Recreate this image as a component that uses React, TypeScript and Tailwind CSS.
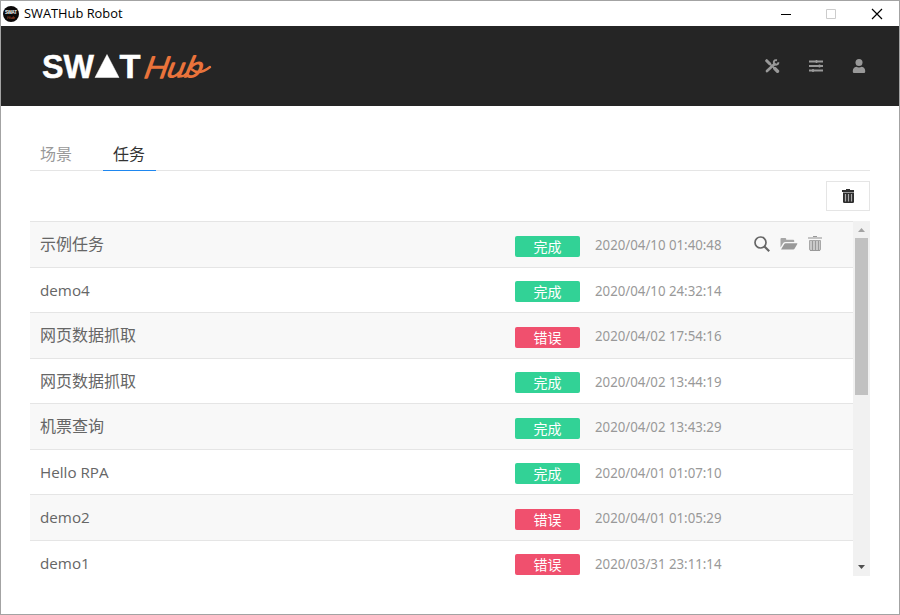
import React from "react";

const rows = [
  { name: "示例任务", ok: true, date: "2020/04/10 01:40:48" },
  { name: "demo4", ok: true, date: "2020/04/10 24:32:14" },
  { name: "网页数据抓取", ok: false, date: "2020/04/02 17:54:16" },
  { name: "网页数据抓取", ok: true, date: "2020/04/02 13:44:19" },
  { name: "机票查询", ok: true, date: "2020/04/02 13:43:29" },
  { name: "Hello RPA", ok: true, date: "2020/04/01 01:07:10" },
  { name: "demo2", ok: false, date: "2020/04/01 01:05:29" },
  { name: "demo1", ok: false, date: "2020/03/31 23:11:14" },
];

function Trash() {
  return (
    <svg width="14" height="16" viewBox="0 0 14 16" className="block" fill="#2e2e2e">
      <path d="M5 1h4v1h4v2H1V2h4z" />
      <path d="M2 4.500h11v9.200q0 1.300-1.300 1.300H3.300Q2 15 2 13.700z" />
      <path d="M4.500 6v7.500M7.500 6v7.500M10.500 6v7.500" stroke="#aaa" strokeWidth="1.200" />
    </svg>
  );
}

function TrashOutline() {
  return (
    <svg width="14" height="16" viewBox="0 0 14 16" className="block">
      <path d="M5 0h4v1H5z" fill="#999" />
      <path d="M0 1h14v2H0z" fill="#c4c4c4" />
      <path d="M1.500 4.500h11V13q0 1.500-1.500 1.500H3Q1.500 14.500 1.500 13z" fill="#c9c9c9" stroke="#a8a8a8" />
      <path d="M4.500 5v9M7.500 5v9M10.500 5v9" stroke="#999" />
      <path d="M2 14.500h10" stroke="#999" />
    </svg>
  );
}

function Logo() {
  return (
    <svg width="176" height="40" viewBox="0 0 176 40" className="block">
      <g fill="#fff" stroke="#fff" strokeWidth="0.5" fontFamily="'Liberation Sans', Arial, sans-serif" fontWeight="700" fontSize="33">
        <text x="2" y="31.500" textLength="52" lengthAdjust="spacingAndGlyphs">SW</text>
        <text x="79.500" y="31.500" textLength="21" lengthAdjust="spacingAndGlyphs">T</text>
        <path d="M67 8.500 79 31.500H55z" />
      </g>
      <g
        fill="#ea733b"
        stroke="#ea733b"
        strokeWidth="1.700"
        strokeLinejoin="round"
        fontFamily="Lato, sans-serif"
        fontStyle="italic"
        fontWeight="300"
      >
        <text transform="translate(103 31.500) skewX(-12)" fontSize="30" textLength="24" lengthAdjust="spacingAndGlyphs">H</text>
        <text transform="translate(126 31) skewX(-14)" fontSize="28" textLength="17" lengthAdjust="spacingAndGlyphs">u</text>
        <text transform="translate(143.500 31) skewX(-16)" fontSize="29" textLength="17" lengthAdjust="spacingAndGlyphs">b</text>
      </g>
      <path d="M140 30q3 1 6-2M152 23.500q3 2.500 6 2.500 6 0 12-5" fill="none" stroke="#ea733b" strokeWidth="2.400" strokeLinecap="round" />
    </svg>
  );
}

export default function App() {
  return (
    <div className="flex h-[615px] w-[900px] flex-col overflow-hidden border border-[#a3a3a3] bg-white font-['Open_Sans','Noto_Sans_CJK_SC',sans-serif]">
      <div className="flex h-[25px] shrink-0 items-center justify-between pl-[2px] pr-[15px]">
        <div className="flex items-center gap-[5px]">
          <svg width="16" height="16" viewBox="0 0 16 16">
            <circle cx="8" cy="8" r="8" fill="#0b0808" />
            <text x="2" y="8" fontSize="4.500" fontWeight="700" fill="#fff" fontFamily="Liberation Sans, sans-serif" textLength="12">SWAT</text>
            <text x="4" y="13" fontSize="4.500" fontStyle="italic" fill="#c45a30" fontFamily="Lato, sans-serif" textLength="8">Hub</text>
          </svg>
          <svg width="110" height="20" className="block">
            <text x="0" y="14" fontSize="12.500" textLength="98.500" lengthAdjust="spacingAndGlyphs" fill="#000">SWATHub Robot</text>
          </svg>
        </div>
        <svg width="104" height="14" viewBox="0 0 104 14" fill="none" className="block">
          <path d="M1 7.500h10" stroke="#000" />
          <path d="M46.500 2.500h9v9h-9z" stroke="#ccc" />
          <path d="m92 2 10 10M102 2 92 12" stroke="#000" strokeWidth="1.200" />
        </svg>
      </div>

      <header className="flex h-[80px] shrink-0 items-center justify-between bg-[#252525] pl-[39px] pr-[33px]">
        <Logo />
        <div className="flex items-center text-[#999]">
          <svg width="15" height="14" viewBox="0 0 15 14" className="mr-[29px] block" fill="none" stroke="currentColor" strokeLinecap="round">
            <path d="m1.700 1.700 3 3" strokeWidth="3" />
            <path d="m4 4 5 5" strokeWidth="1.700" />
            <path d="m9.800 9.500 2.700 2.700" strokeWidth="3.400" />
            <path d="m2 12 7.500-7" strokeWidth="2.700" />
            <path d="M12 1.200Q9.200.6 8.800 3q-.1 2.700 2.300 2.700 2.200 0 2.300-2.400" strokeWidth="1.900" strokeLinecap="butt" />
          </svg>
          <svg width="14" height="14" viewBox="0 0 14 14" className="mr-[29px] block" fill="none" stroke="currentColor">
            <path d="M0 2.500h14M0 7h14M0 11.500h14" strokeWidth="1.900" />
            <path d="M7.500 1v3M10.500 5.500v3M4 10v3" strokeWidth="1.600" />
          </svg>
          <svg width="14" height="14" viewBox="0 0 14 14" className="block" fill="currentColor">
            <circle cx="7" cy="3.500" r="3.500" />
            <path d="M2 14Q.8 14 .8 12.800V12q0-3.500 3.500-4.200Q7 9 9.700 7.800q3.500.7 3.500 4.200v.8q0 1.200-1.200 1.200z" />
          </svg>
        </div>
      </header>

      <main className="flex flex-col px-[29px] pt-[30px]">
        <nav className="flex h-[35px] shrink-0 border-b border-[#e5e5e5] text-base">
          <div className="mr-[20px] h-[35px] w-[53px] pl-[10px] leading-[37px] text-[#999]">场景</div>
          <div className="h-[35px] w-[53px] border-b border-[#1e87f0] pl-[10px] leading-[37px] text-[#333]">任务</div>
        </nav>

        <div className="flex h-[50px] justify-end pt-[10px]">
          <button className="flex h-[30px] w-[44px] items-center justify-center border border-[#e5e5e5]">
            <Trash />
          </button>
        </div>

        <div className="flex h-[355px]">
          <div className="flex-1 overflow-hidden">
            {rows.map((r, i) => (
              <div
                key={i}
                className={`flex border-t border-[#e5e5e5] ${i % 2 ? "h-[45px]" : "h-[46px] bg-[#f8f8f8]"}`}
              >
                <div className="w-[485px] pl-[10px] text-[15.200px] leading-[44px] text-[#666]">
                  <span className={/^[A-Za-z]/.test(r.name) ? "" : "text-base leading-[44px]"}>{r.name}</span>
                </div>
                <div className={i % 2 ? "pt-[13px]" : "pt-[14px]"}>
                  <div
                    className={`h-[21px] w-[65px] rounded-[2px] text-center text-sm leading-[22px] text-white ${r.ok ? "bg-[#32d296]" : "bg-[#f0506e]"}`}
                  >
                    {r.ok ? "完成" : "错误"}
                  </div>
                </div>
                <svg width="140" height="44" className="ml-[15px] block font-['Noto_Sans',sans-serif]">
                  <text x="0" y="28" fontSize="13.600" textLength="126.500" lengthAdjust="spacingAndGlyphs" fill="#999">{r.date}</text>
                </svg>
                {i === 0 && (
                  <div className="ml-[18px] flex h-[44px] items-center">
                    <svg width="18" height="18" viewBox="0 0 18 18" fill="none" stroke="#666" strokeWidth="1.700" className="block">
                      <circle cx="7.500" cy="7.500" r="5.500" />
                      <path d="m11.500 11.500 4.700 4.700" strokeWidth="2.200" />
                    </svg>
                    <svg width="18" height="12" viewBox="0 0 18 12" className="ml-[9px] block" fill="#999">
                      <path d="M.5 9.500V1q0-1 1-1h3.700q1 0 1 1v.8h7q1 0 1 1V4H5.500Q4 4 3.200 5z" fill="#a6a6a6" />
                      <path d="M1 11.500 4.300 6Q4.700 5.200 5.700 5.200h11.200q.8 0 .4.900l-2.600 4.500q-.5.900-1.500.9z" />
                    </svg>
                    <div className="ml-[10px]">
                      <TrashOutline />
                    </div>
                  </div>
                )}
              </div>
            ))}
          </div>
          <div className="flex w-[17px] flex-col items-center bg-[#f1f1f1]">
            <svg width="17" height="17" className="block"><path d="M5 11h7L8.500 7z" fill="#a3a3a3" /></svg>
            <div className="h-[157px] w-[13px] bg-[#c1c1c1]" />
            <div className="flex-1" />
            <svg width="17" height="17" className="block"><path d="M5 6h7l-3.500 4z" fill="#505050" /></svg>
          </div>
        </div>
      </main>
    </div>
  );
}
